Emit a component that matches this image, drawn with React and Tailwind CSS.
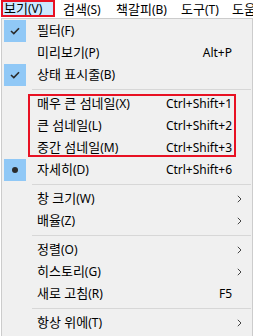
import React from "react";

const FONT = { fontFamily: '"Noto Sans", "Noto Sans CJK KR", sans-serif' };

const items = [
  { label: "필터", key: "(F)", mark: "check" },
  { label: "미리보기", key: "(P)", shortcut: "Alt+P" },
  { label: "상태 표시줄", key: "(B)", mark: "check" },
  { sep: true },
  { label: "매우 큰 섬네일", key: "(X)", shortcut: "Ctrl+Shift+1" },
  { label: "큰 섬네일", key: "(L)", shortcut: "Ctrl+Shift+2" },
  { label: "중간 섬네일", key: "(M)", shortcut: "Ctrl+Shift+3" },
  { label: "자세히", key: "(D)", shortcut: "Ctrl+Shift+6", mark: "dot" },
  { sep: true },
  { label: "창 크기", key: "(W)", sub: true },
  { label: "배율", key: "(Z)", sub: true },
  { sep: true },
  { label: "정렬", key: "(O)", sub: true },
  { label: "히스토리", key: "(G)", sub: true },
  { label: "새로 고침", key: "(R)", shortcut: "F5" },
  { sep: true },
  { label: "항상 위에", key: "(T)", sub: true },
];

// Korean glyphs read a touch larger than the latin ones in the original
const Label = ({ text, k }) => (
  <span className="whitespace-nowrap">
    <span className="text-[13px]">{text}</span>
    <span>{k}</span>
  </span>
);

const Mark = ({ type }) => {
  if (!type) return <div className="w-[22px] h-[22px] ml-[2px] shrink-0" />;
  return (
    <div className="w-[22px] h-[22px] ml-[2px] shrink-0 bg-[#90c8f6] flex items-center justify-center">
      {type === "check" ? (
        <svg width="10" height="8" viewBox="0 0 10 8">
          <path d="M1 4 L3.8 6.6 L9 1.2" fill="none" stroke="#2b2b2b" strokeWidth="1.6" />
        </svg>
      ) : (
        <div className="w-[6px] h-[6px] rounded-full bg-[#2b2b2b]" />
      )}
    </div>
  );
};

const Row = ({ item }) => (
  <div className="flex items-center h-[22px]">
    <Mark type={item.mark} />
    <div className="flex-1 pl-[11px]">
      <Label text={item.label} k={item.key} />
    </div>
    <span className="whitespace-nowrap">{item.shortcut}</span>
    <div className="w-[20px] flex items-center pl-[5px]">
      {item.sub && (
        <svg width="5" height="8" viewBox="0 0 5 8">
          <path d="M0.8 0.8 L4 4 L0.8 7.2" fill="none" stroke="#444" strokeWidth="1" />
        </svg>
      )}
    </div>
  </div>
);

export default function App() {
  return (
    <div className="relative w-[253px] h-[336px] bg-white overflow-hidden text-[12px] text-black" style={FONT}>
      {/* menu bar */}
      <div className="flex h-[18px] items-stretch leading-none whitespace-nowrap">
        <div className="ml-[1px] w-[54px] h-[17px] shrink-0 border-2 border-[#e81123] bg-[#cce8ff] pl-[1px] flex items-center">
          <Label text="보기" k="(V)" />
        </div>
        <div className="ml-[8px] w-[53px] shrink-0 flex items-center">
          <Label text="검색" k="(S)" />
        </div>
        <div className="w-[65px] shrink-0 flex items-center">
          <Label text="책갈피" k="(B)" />
        </div>
        <div className="w-[51px] shrink-0 flex items-center">
          <Label text="도구" k="(T)" />
        </div>
        <div className="shrink-0 flex items-center">
          <Label text="도움말" k="(H)" />
        </div>
      </div>

      {/* dropdown */}
      <div className="ml-[1px] border-l border-t border-r border-[#cccccc] bg-[#f0f0f0] pt-[1px] h-[320px]">
        {items.map((item, i) =>
          item.sep ? (
            <div key={i} className="h-[7px] flex items-center pl-[30px] pr-[1px]">
              <div className="h-px w-full bg-[#d7d7d7]" />
            </div>
          ) : (
            <Row key={i} item={item} />
          )
        )}
      </div>

      {/* annotation box */}
      <div className="absolute left-[28px] top-[94px] w-[208px] h-[63px] border-2 border-[#e81123]" />
    </div>
  );
}
